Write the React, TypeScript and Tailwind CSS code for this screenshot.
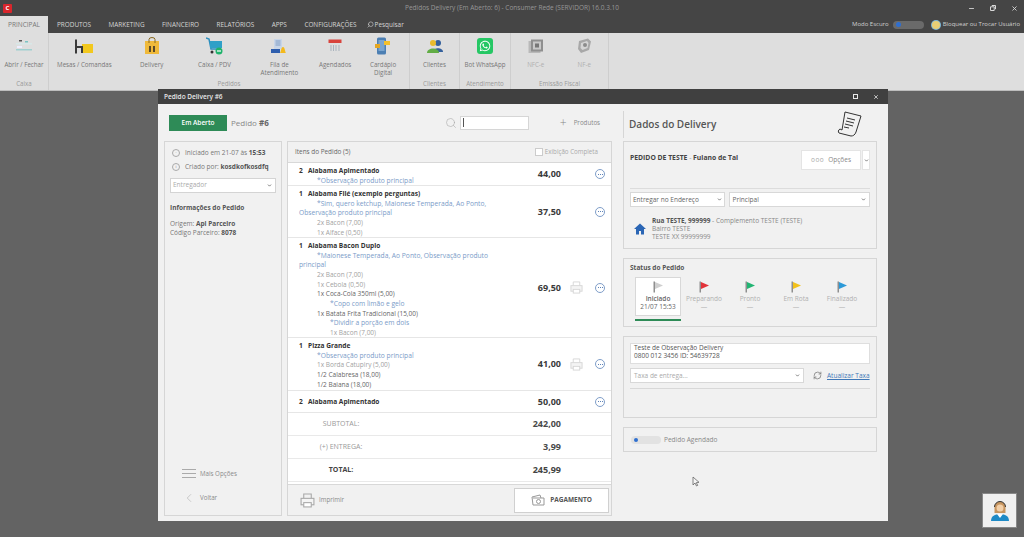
import { ChevronDown, ChevronLeft, Minus, RefreshCw, Search, X } from "lucide-react";
import { FaWhatsapp } from "react-icons/fa";
import type { ReactNode } from "react";

const tabs = ["PRODUTOS", "MARKETING", "FINANCEIRO", "RELATÓRIOS", "APPS", "CONFIGURAÇÕES"];

function RibbonButton({ label, width, icon, muted }: { label: ReactNode; width: string; icon: ReactNode; muted?: boolean }) {
  return (
    <div className={`${width} flex flex-col items-center pt-[3px]`}>
      <div className="h-[20px] w-[20px] flex items-center justify-center">{icon}</div>
      <div className={`mt-[5px] text-center text-[6.2px] leading-[8px] ${muted ? "text-[#b0b0b0]" : "text-[#777]"}`}>{label}</div>
    </div>
  );
}

function RibbonGroup({ title, width, children }: { title: string; width: string; children: ReactNode }) {
  return (
    <div className={`${width} h-[57px] flex flex-col border-r border-[#cecece]`}>
      <div className="flex flex-1">{children}</div>
      <div className="h-[10px] text-center text-[6.2px] leading-[8px] text-[#9a9a9a]">{title}</div>
    </div>
  );
}

function Ribbon() {
  return (
    <div className="flex h-[58px] bg-[#dedede] border-b border-[#bdbdbd]">
      <RibbonGroup title="Caixa" width="w-[49px]">
        <RibbonButton
          label="Abrir / Fechar"
          width="w-[48px]"
          icon={
            <svg width="18" height="16" viewBox="0 0 18 16">
              <rect x="1" y="5" width="16" height="1.5" fill="#d8e8e8" />
              <rect x="4" y="2" width="3" height="1.5" fill="#555" />
              <rect x="10" y="3" width="3" height="1.5" fill="#7cc4c4" />
              <rect x="1" y="11" width="16" height="1.5" fill="#9fd0d0" />
              <rect x="2" y="8" width="5" height="2" fill="#eef" />
            </svg>
          }
        />
      </RibbonGroup>
      <RibbonGroup title="Pedidos" width="w-[361px]">
        <RibbonButton
          label="Mesas / Comandas"
          width="w-[71px]"
          icon={
            <svg width="18" height="15" viewBox="0 0 18 15">
              <rect x="7" y="5" width="11" height="9" fill="#f2c81e" />
              <path d="M1 0.5v14M1 8h6v6" fill="none" stroke="#3a3a3a" strokeWidth="2" />
            </svg>
          }
        />
        <RibbonButton
          label="Delivery"
          width="w-[64px]"
          icon={
            <svg width="16" height="18" viewBox="0 0 16 18">
              <rect x="1" y="4" width="14" height="13" fill="#efb93a" />
              <path d="M5 6V2.5a3 2 0 0 1 6 0V6" fill="none" stroke="#8a6a20" />
              <path d="M5 9h2v6H5zM9 9h2v6H9z" fill="#5a4a2a" />
            </svg>
          }
        />
        <RibbonButton
          label="Caixa / PDV"
          width="w-[62px]"
          icon={
            <svg width="18" height="18" viewBox="0 0 18 18">
              <path d="M0 1l3 1 2 10h9" fill="none" stroke="#2c8fbf" strokeWidth="1.5" />
              <rect x="4" y="4" width="12" height="7" fill="#2fa0c8" />
              <circle cx="6" cy="15" r="1.5" fill="#333" />
              <circle cx="13" cy="14" r="3.5" fill="#1fb36b" />
              <rect x="11" y="13.4" width="4" height="1.2" fill="#fff" />
            </svg>
          }
        />
        <RibbonButton
          label={
            <>
              Fila de
              <br />
              Atendimento
            </>
          }
          width="w-[68px]"
          icon={
            <svg width="16" height="17" viewBox="0 0 16 17">
              <rect x="3" y="1" width="8" height="10" fill="#c7d5e8" />
              <path d="M4.5 3h5M4.5 5h5M4.5 7h5" stroke="#6d8fbc" strokeWidth="0.8" />
              <rect x="0" y="11" width="9" height="4" fill="#2f5fae" />
              <path d="M9 15c1-1 1-6 3-6s2 5 3 6z" fill="#f3b91d" />
            </svg>
          }
        />
        <RibbonButton
          label="Agendados"
          width="w-[44px]"
          icon={
            <svg width="14" height="14" viewBox="0 0 14 14">
              <rect x="0.5" y="0.5" width="13" height="3.5" fill="#d8433c" />
              <path d="M3 6v6M5.5 6v6M8 6v6M11 6v6" stroke="#a9b3bd" strokeWidth="1" />
            </svg>
          }
        />
        <RibbonButton
          label={
            <>
              Cardápio
              <br />
              Digital
            </>
          }
          width="w-[52px]"
          icon={
            <svg width="16" height="18" viewBox="0 0 16 18">
              <rect x="2" y="0.5" width="9" height="17" rx="1.5" fill="#4c7fb3" />
              <rect x="3.5" y="3" width="6" height="11" fill="#7aa5cf" />
              <rect x="9" y="4" width="6" height="4" fill="#f3c02c" />
              <rect x="0" y="7" width="5" height="4" fill="#e5a722" />
            </svg>
          }
        />
      </RibbonGroup>
      <RibbonGroup title="Clientes" width="w-[50px]">
        <RibbonButton
          label="Clientes"
          width="w-[50px]"
          icon={
            <svg width="18" height="15" viewBox="0 0 18 15">
              <circle cx="12" cy="4" r="3" fill="#34609c" />
              <path d="M7 13c0-5 10-5 10 0z" fill="#34609c" />
              <circle cx="7" cy="4" r="3" fill="#e8bb2e" />
              <path d="M1 14c0-6 12-6 12 0z" fill="#62ad45" />
            </svg>
          }
        />
      </RibbonGroup>
      <RibbonGroup title="Atendimento" width="w-[51px]">
        <RibbonButton
          label="Bot WhatsApp"
          width="w-[50px]"
          icon={
            <div className="flex h-[16px] w-[16px] items-center justify-center rounded-[3px] bg-[#25c764]">
              <FaWhatsapp className="h-[12px] w-[12px] text-white" />
            </div>
          }
        />
      </RibbonGroup>
      <RibbonGroup title="Emissão Fiscal" width="w-[98px]">
        <RibbonButton
          label="NFC-e"
          width="w-[50px]"
          muted
          icon={
            <svg width="16" height="15" viewBox="0 0 16 15">
              <rect x="0.5" y="2" width="12" height="12" fill="#b9b9b9" />
              <rect x="3" y="0.5" width="12" height="12" fill="#8f8f8f" />
              <rect x="5" y="2.5" width="8" height="8" fill="#c9c9c9" />
              <rect x="7" y="4.5" width="4" height="4" fill="#777" />
            </svg>
          }
        />
        <RibbonButton
          label="NF-e"
          width="w-[48px]"
          muted
          icon={
            <svg width="16" height="16" viewBox="0 0 16 16">
              <path d="M3 3l9-2.5 3 3L13 12l-8 3-3-4z" fill="#a8a8a8" />
              <path d="M5 5l6-2 1.5 2-1 5-5 2-2-2z" fill="#d5d5d5" />
              <circle cx="9" cy="7" r="2" fill="#8c8c8c" />
            </svg>
          }
        />
      </RibbonGroup>
    </div>
  );
}

function TopBar() {
  return (
    <div className="h-[33px] bg-[#454545] flex flex-col">
      <div className="relative h-[16px] flex items-center">
        <div className="ml-[3px] flex h-[9px] w-[9px] items-center justify-center rounded-[1px] bg-[#d8262c] text-[6px] font-bold leading-none text-white">C</div>
        <div className="ml-[393px] text-[6.5px] text-[#979797]">Pedidos Delivery (Em Aberto: 6) - Consumer Rede (SERVIDOR) 16.0.3.10</div>
        <div className="ml-auto flex items-center gap-[15px] pr-[6px] text-[#d8d8d8]">
          <Minus className="h-[7px] w-[7px]" strokeWidth={3} />
          <svg width="6" height="6" viewBox="0 0 6 6">
            <path d="M0.5 1.8h3.7v3.7H0.5zM1.8 0.5h3.7v3.7" fill="none" stroke="#d8d8d8" />
          </svg>
          <X className="h-[7px] w-[7px]" strokeWidth={3} />
        </div>
      </div>
      <div className="h-[17px] flex items-center">
        <div className="flex h-full w-[48px] items-center justify-center bg-[#dedede] text-[6.5px] text-[#777]">PRINCIPAL</div>
        <div className="ml-[9px] flex items-center gap-[17.5px] text-[6.4px] text-[#d5d5d5]">
          {tabs.map((tab) => (
            <span key={tab}>{tab}</span>
          ))}
        </div>
        <div className="ml-[10px] flex items-center gap-[1px] text-[6.4px] text-[#d5d5d5]">
          <Search className="h-[7px] w-[7px] -scale-x-100" />
          Pesquisar
        </div>
        <div className="ml-auto flex items-center pr-[4px] text-[6px] text-[#d0d0d0]">
          Modo Escuro
          <div className="ml-[4px] flex h-[8px] w-[31px] items-center rounded-full bg-[#6a6a6a] pl-[3px]">
            <div className="h-[5px] w-[5px] rounded-full bg-[#2f6fd0]" />
          </div>
          <div className="ml-[8px] h-[8px] w-[8px] rounded-full bg-[#e8cf75] ring-1 ring-[#7fb8d8]" />
          <span className="ml-[3px]">Bloquear ou Trocar Usuário</span>
        </div>
      </div>
    </div>
  );
}

function DotsButton() {
  return (
    <div className="flex h-[10px] w-[10px] items-center justify-center gap-[1px] rounded-full border border-[#7f9ec9]">
      <span className="h-[1px] w-[1px] bg-[#5f84b8]" />
      <span className="h-[1px] w-[1px] bg-[#5f84b8]" />
      <span className="h-[1px] w-[1px] bg-[#5f84b8]" />
    </div>
  );
}

function PrinterIcon({ stroke = "#d6d6d6", size = 13 }: { stroke?: string; size?: number }) {
  return (
    <svg width={size} height={size} viewBox="0 0 14 14" fill="none" stroke={stroke}>
      <path d="M3.5 5V1h7v4" />
      <rect x="1" y="5" width="12" height="6" fill="#f4f4f4" />
      <rect x="3.5" y="9" width="7" height="4" fill="#fff" />
    </svg>
  );
}

function RowActions({ printer }: { printer?: boolean }) {
  return (
    <>
      <div className="flex w-[34px] justify-center pr-[4px]">{printer && <PrinterIcon />}</div>
      <DotsButton />
      <div className="w-[6px]" />
    </>
  );
}

function ItemRow({ height, price, printer, children }: { height: string; price: string; printer?: boolean; children: ReactNode }) {
  return (
    <div className={`${height} flex items-center bg-white border-b border-[#e6e6e6] pl-[11px]`}>
      <div className="flex-1 self-start pt-[3px] text-[6.5px] leading-[9.67px]">{children}</div>
      <div className="w-[50px] text-right text-[9px] font-bold text-[#3a3a3a]">{price}</div>
      <RowActions printer={printer} />
    </div>
  );
}

function Name({ qty, name }: { qty: number; name: string }) {
  return (
    <div className="text-[6.6px] font-bold text-[#333]">
      <span className="inline-block w-[9px]">{qty}</span>
      {name}
    </div>
  );
}

function Obs({ children }: { children: ReactNode }) {
  return <div className="w-[205px] indent-[18px] text-[6.7px] text-[#7a9bc8]">{children}</div>;
}

function Add({ children, dark, deep }: { children: ReactNode; dark?: boolean; deep?: boolean }) {
  return <div className={`${deep ? "pl-[31px]" : "pl-[18px]"} ${dark ? "text-[#666]" : "text-[#a2a2a2]"}`}>{children}</div>;
}

function TotalRow({ label, value, bold }: { label: string; value: string; bold?: boolean }) {
  return (
    <div className="h-[23px] flex items-center bg-white border-b border-[#e9e9e9]">
      <div className={`w-[106px] text-center text-[7px] ${bold ? "font-bold text-[#444]" : "text-[#999]"}`}>{label}</div>
      <div className={`w-[167px] text-right text-[9px] font-bold ${bold ? "text-[#444]" : "text-[#4a4a4a]"}`}>{value}</div>
    </div>
  );
}

function ItemsPanel() {
  return (
    <div className="w-[325px] h-[375px] flex flex-col border border-[#d6d6d6] bg-[#f1f1f1]">
      <div className="h-[21px] flex items-center justify-between border-b border-[#d8d8d8] pl-[7px] pr-[13px]">
        <span className="text-[6.4px] text-[#666]">Itens do Pedido (5)</span>
        <div className="flex items-center gap-[2px] text-[6.2px] text-[#aaa]">
          <span className="h-[8px] w-[8px] border border-[#ccc] bg-white" />
          Exibição Completa
        </div>
      </div>
      <ItemRow height="h-[23px]" price="44,00">
        <Name qty={2} name="Alabama Apimentado" />
        <Obs>*Observação produto principal</Obs>
      </ItemRow>
      <ItemRow height="h-[52px]" price="37,50">
        <Name qty={1} name="Alabama Filé (exemplo perguntas)" />
        <Obs>*Sim, quero ketchup, Maionese Temperada, Ao Ponto, Observação produto principal</Obs>
        <Add>2x Bacon (7,00)</Add>
        <Add>1x Alface (0,50)</Add>
      </ItemRow>
      <ItemRow height="h-[100px]" price="69,50" printer>
        <Name qty={1} name="Alabama Bacon Duplo" />
        <Obs>*Maionese Temperada, Ao Ponto, Observação produto principal</Obs>
        <Add>2x Bacon (7,00)</Add>
        <Add>1x Cebola (0,50)</Add>
        <Add dark>1x Coca-Cola 350ml (5,00)</Add>
        <div className="pl-[31px] text-[6.7px] text-[#7a9bc8]">*Copo com limão e gelo</div>
        <Add dark>1x Batata Frita Tradicional (15,00)</Add>
        <div className="pl-[31px] text-[6.7px] text-[#7a9bc8]">*Dividir a porção em dois</div>
        <Add deep>1x Bacon (7,00)</Add>
      </ItemRow>
      <ItemRow height="h-[53px]" price="41,00" printer>
        <Name qty={1} name="Pizza Grande" />
        <div className="pl-[18px] text-[6.7px] text-[#7a9bc8]">*Observação produto principal</div>
        <Add>1x Borda Catupiry (5,00)</Add>
        <Add dark>1/2 Calabresa (18,00)</Add>
        <Add dark>1/2 Baiana (18,00)</Add>
      </ItemRow>
      <div className="h-[22px] flex items-center bg-white border-b border-[#e6e6e6] pl-[11px]">
        <div className="flex-1">
          <Name qty={2} name="Alabama Apimentado" />
        </div>
        <div className="w-[50px] text-right text-[9px] font-bold text-[#3a3a3a]">50,00</div>
        <RowActions />
      </div>
      <TotalRow label="SUBTOTAL:" value="242,00" />
      <TotalRow label="(+) ENTREGA:" value="3,99" />
      <TotalRow label="TOTAL:" value="245,99" bold />
      <div className="h-[3px] bg-white border-b border-[#d8d8d8]" />
      <div className="flex flex-1 items-center justify-between pl-[12px] pr-[2px]">
        <div className="flex items-center gap-[4px] text-[6.2px] text-[#8a8a8a]">
          <PrinterIcon stroke="#a8a8a8" size={15} />
          Imprimir
        </div>
        <div className="flex h-[25px] w-[95px] items-center justify-center gap-[5px] border border-[#d0d0d0] bg-white text-[6.5px] font-bold text-[#555]">
          <svg width="14" height="13" viewBox="0 0 14 13" fill="none" stroke="#999">
            <path d="M1 3l8-2 1 3M1 3l1 8h11V4H2" />
            <circle cx="7.5" cy="7.5" r="2" />
          </svg>
          PAGAMENTO
        </div>
      </div>
    </div>
  );
}

function SidePanel() {
  return (
    <div className="relative w-[118px] h-[375px] border border-[#d6d6d6] bg-[#f1f1f1] px-[5px] pt-[6px] text-[6.5px] text-[#777]">
      <div className="flex items-center gap-[5px] pl-[2px]">
        <span className="flex h-[8px] w-[8px] items-center justify-center rounded-full border border-[#aaa] text-[4px]">·</span>
        <span>
          Iniciado em 21-07 às <b className="text-[#555]">15:53</b>
        </span>
      </div>
      <div className="mt-[4px] flex items-center gap-[5px] pl-[2px]">
        <span className="flex h-[8px] w-[8px] items-center justify-center rounded-full border border-[#aaa] text-[4px]">i</span>
        <span>
          Criado por: <b className="text-[#555]">kosdkofkosdfq</b>
        </span>
      </div>
      <div className="mt-[6px] flex h-[15px] items-center justify-between border border-[#d4d4d4] bg-white pl-[2px] pr-[3px] text-[#aaa]">
        Entregador
        <ChevronDown className="h-[5px] w-[5px] text-[#666]" strokeWidth={4} />
      </div>
      <div className="mt-[10px] font-bold text-[#555]">Informações do Pedido</div>
      <div className="mt-[8px] leading-[8.5px]">
        Origem: <b className="text-[#555]">Api Parceiro</b>
        <br />
        Código Parceiro: <b className="text-[#555]">8078</b>
      </div>
      <div className="absolute bottom-[10px] left-[17px] flex flex-col gap-[13px] text-[6.2px] text-[#8a8a8a]">
        <div className="flex items-center gap-[4px]">
          <div className="flex w-[14px] flex-col gap-[3px]">
            <span className="h-[1px] bg-[#aaa]" />
            <span className="h-[1px] bg-[#aaa]" />
            <span className="h-[1px] bg-[#aaa]" />
          </div>
          Mais Opções
        </div>
        <div className="flex items-center gap-[4px]">
          <ChevronLeft className="h-[14px] w-[14px] text-[#aaa]" strokeWidth={1} />
          Voltar
        </div>
      </div>
    </div>
  );
}

function Flag({ color }: { color: string }) {
  return (
    <svg width="12" height="12" viewBox="0 0 12 12">
      <rect x="1.5" y="0.5" width="1.5" height="11" fill="#8f8f8f" />
      <path d="M3 1l8 3.5L3 8z" fill={color} />
    </svg>
  );
}

const statuses = [
  { label: "Preparando", color: "#e2333a" },
  { label: "Pronto", color: "#22b573" },
  { label: "Em Rota", color: "#f3c11b" },
  { label: "Finalizado", color: "#2c9ad8" },
];

function DeliveryColumn() {
  return (
    <div className="ml-[11px] w-[254px]">
      <div className="relative h-[37px] pt-[7px]">
        <div className="flex h-[27px] items-center border-l border-[#d6d6d6] pl-[5px]">
          <span className="text-[10px] font-semibold text-[#555]">Dados do Delivery</span>
        </div>
        <svg className="absolute right-[14px] top-[6px]" width="27" height="29" viewBox="0 0 27 29" fill="none" stroke="#333" strokeWidth="1">
          <path d="M9 2l16 4-5 16c-1 3-3 4-5 4L3 23c-1-1-1-3 1-4l2 1z" />
          <path d="M11 8l8 2M10 11l8 2M9 14l8 2M8 17l5 1" />
        </svg>
      </div>
      <div className="h-[108px] border border-[#d6d6d6] px-[6px] pt-[8px]">
        <div className="flex items-start justify-between">
          <div className="pt-[3px] text-[6.8px] font-bold text-[#444]">
            PEDIDO DE TESTE <span className="font-normal text-[#999]">-</span> Fulano de Tal
          </div>
          <div className="flex h-[20px]">
            <div className="flex w-[60px] items-center justify-center gap-[4px] border border-[#e4e4e4] bg-white text-[6.5px] text-[#888]">
              <span className="text-[#aaa] tracking-[0.5px]">ooo</span> Opções
            </div>
            <div className="ml-[1px] flex w-[8px] items-center justify-center border border-[#e4e4e4] bg-white">
              <ChevronDown className="h-[5px] w-[5px] text-[#666]" strokeWidth={4} />
            </div>
          </div>
        </div>
        <div className="mt-[18px] border-t border-[#dcdcdc] pt-[3px] flex gap-[4px]">
          <div className="flex h-[15px] w-[95px] items-center justify-between border border-[#d8d8d8] bg-white px-[2px] text-[6.5px] text-[#666]">
            Entregar no Endereço
            <ChevronDown className="h-[5px] w-[5px] text-[#666]" strokeWidth={4} />
          </div>
          <div className="flex h-[15px] w-[142px] items-center justify-between border border-[#d8d8d8] bg-white px-[3px] text-[6.5px] text-[#666]">
            Principal
            <ChevronDown className="h-[5px] w-[5px] text-[#666]" strokeWidth={4} />
          </div>
        </div>
        <div className="mt-[10px] flex items-center gap-[6px] pl-[4px]">
          <svg width="12" height="12" viewBox="0 0 12 12">
            <path d="M6 0.5L0 6h2v5.5h3V8h2v3.5h3V6h2z" fill="#2b66b5" />
          </svg>
          <div className="text-[6.5px] leading-[8px] text-[#888]">
            <b className="text-[#555]">Rua TESTE, 999999</b> - Complemento TESTE (TESTE)
            <br />
            Bairro TESTE
            <br />
            TESTE XX 99999999
          </div>
        </div>
      </div>
      <div className="mt-[9px] h-[69px] border border-[#d6d6d6] px-[6px] pt-[4px]">
        <div className="text-[6.5px] font-bold text-[#555]">Status do Pedido</div>
        <div className="mt-[4px] flex pl-[5px]">
          <div className="w-[46px]">
            <div className="flex h-[39px] flex-col items-center border border-[#d8d8d8] bg-white pt-[3px] text-[6.5px] leading-[8px] text-[#666]">
              <Flag color="#cfcfcf" />
              <b className="mt-[2px] font-semibold">Iniciado</b>
              <span>21/07 15:53</span>
            </div>
            <div className="mt-[3px] h-[2px] bg-[#2e8b57]" />
          </div>
          {statuses.map((s) => (
            <div key={s.label} className="flex w-[46px] flex-col items-center pt-[4px] text-[6.5px] leading-[8px] text-[#b0b0b0]">
              <Flag color={s.color} />
              <span className="mt-[2px]">{s.label}</span>
              <span>—</span>
            </div>
          ))}
        </div>
      </div>
      <div className="mt-[9px] h-[82px] border border-[#d6d6d6] px-[6px] pt-[6px]">
        <div className="h-[21px] border border-[#dedede] bg-white pl-[3px] text-[6.5px] leading-[8px] text-[#555]">
          Teste de Observação Delivery
          <br />
          0800 012 3456 ID: 54639728
        </div>
        <div className="mt-[4px] flex items-center">
          <div className="flex h-[15px] w-[174px] items-center justify-between border border-[#d8d8d8] bg-white px-[3px] text-[6.5px] text-[#aaa]">
            Taxa de entrega...
            <ChevronDown className="h-[5px] w-[5px] text-[#666]" strokeWidth={4} />
          </div>
          <RefreshCw className="ml-[9px] h-[9px] w-[9px] text-[#777]" />
          <span className="ml-[5px] text-[6.5px] text-[#3f78b8] underline">Atualizar Taxa</span>
        </div>
        <div className="mt-[5px] border-t border-[#d8d8d8]" />
      </div>
      <div className="mt-[9px] h-[25px] flex items-center border border-[#d6d6d6] pl-[7px] text-[6.5px] text-[#888]">
        <div className="mr-[3px] flex h-[8px] w-[30px] items-center rounded-full bg-[#e2e2e2] pl-[3px]">
          <div className="h-[4px] w-[4px] rounded-full bg-[#2f6fd0]" />
        </div>
        Pedido Agendado
      </div>
    </div>
  );
}

function OrderModal() {
  return (
    <div className="absolute left-[158px] top-[89px] w-[730px] h-[432px] flex flex-col bg-[#f1f1f1]">
      <div className="h-[15px] flex items-center justify-between bg-[#404040] pl-[6px] pr-[8px] text-[6.5px] font-semibold text-[#e8e8e8]">
        Pedido Delivery #6
        <div className="flex items-center gap-[15px] pr-[1px]">
          <span className="h-[5px] w-[5px] border border-[#e8e8e8]" />
          <X className="h-[6px] w-[6px]" strokeWidth={3} />
        </div>
      </div>
      <div className="flex pl-[6px]">
        <div className="w-[448px]">
          <div className="relative h-[37px] flex items-center pl-[5px]">
            <div className="flex h-[16px] w-[58px] items-center justify-center bg-[#2e8b57] text-[6.5px] font-semibold text-white">Em Aberto</div>
            <span className="ml-[4px] text-[8px] text-[#888]">
              Pedido <b className="text-[#666]">#6</b>
            </span>
            <div className="ml-[176px] flex items-center gap-[3px]">
              <Search className="h-[12px] w-[12px] text-[#aaa]" strokeWidth={1.2} />
              <div className="flex h-[14px] w-[69px] items-center border border-[#d6d6d6] bg-white pl-[2px]">
                <span className="h-[9px] w-[1px] bg-[#555]" />
              </div>
            </div>
            <div className="ml-[31px] flex items-center gap-[7px] text-[6.2px] text-[#888]">
              <span className="text-[12px] font-light leading-none text-[#888]">+</span>
              Produtos
            </div>
          </div>
          <div className="flex gap-[5px]">
            <SidePanel />
            <ItemsPanel />
          </div>
        </div>
        <DeliveryColumn />
      </div>
    </div>
  );
}

export default function App() {
  return (
    <div className="relative w-[1024px] h-[537px] overflow-hidden bg-[#636363] font-['Open_Sans','Noto_Sans',sans-serif]">
      <TopBar />
      <Ribbon />
      <OrderModal />
      <svg className="absolute left-[692px] top-[476px]" width="9" height="12" viewBox="0 0 9 12">
        <path d="M1 1v8l2-2 1.5 3 1.2-.6L4.3 6.6 7 6.3z" fill="#f5f5f5" stroke="#555" strokeWidth="0.7" />
      </svg>
      <div className="absolute left-[982px] top-[493px] flex h-[35px] w-[35px] items-center justify-center border border-[#888] bg-[#f0f0f0]">
        <svg width="18" height="22" viewBox="0 0 18 22">
          <path d="M3.5 13V7a5.5 5.5 0 0 1 11 0v6z" fill="#c7955f" />
          <circle cx="9" cy="8" r="3.5" fill="#f2cfa8" />
          <path d="M3.5 7a5.5 5.5 0 0 1 11 0" fill="none" stroke="#333" />
          <path d="M0 21c0-5 4-7 9-7s9 2 9 7z" fill="#1e8ac6" />
          <path d="M6 14l3 4 3-4z" fill="#fff" />
        </svg>
      </div>
    </div>
  );
}
